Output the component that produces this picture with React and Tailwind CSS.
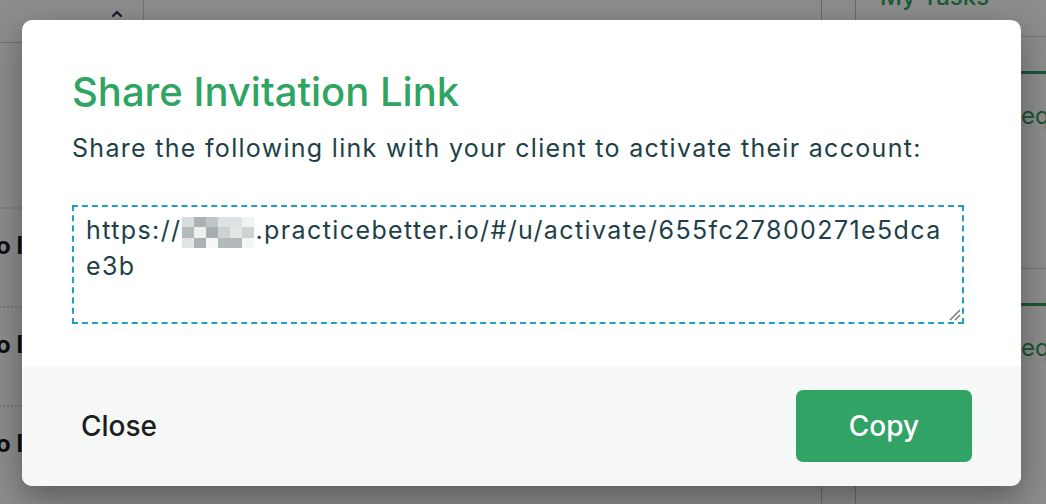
import React from 'react';

const pixels = [
  '#d7dcdc', '#aab3b3', '#bfc6c6', '#dde2e2', '#dde2e2', '#f2f4f4',
  '#b2baba', '#eef0f0', '#a5afaf', '#cdd3d3', '#e3e6e6', '#cdd3d3',
  '#e0e4e4', '#aab3b3', '#f5f6f6', '#b2baba', '#b2baba', '#f5f6f6',
];

// pixelated blur over the account subdomain
const Redacted = () => (
  <span className="inline-block overflow-hidden align-[-9px] mx-[1px] w-[72px] h-[31px]">
    <span className="grid grid-cols-6">
      {pixels.map((c, i) => (
        <span key={i} className="block h-[10.33px]" style={{ backgroundColor: c }} />
      ))}
    </span>
  </span>
);

const BackgroundPage = () => (
  <div className="flex h-full w-full bg-white">
    {/* left table column */}
    <div className="w-[144px] shrink-0 flex flex-col">
      <div className="h-[43px] border-b border-r border-[#c9cdd0] flex justify-end items-start pt-[6px] pr-[18px]">
        <svg width="16" height="16" viewBox="0 0 24 24" fill="none" stroke="#2c3a4d" strokeWidth="3.5" strokeLinecap="round" strokeLinejoin="round">
          <path d="M6 15l6-6 6 6" />
        </svg>
      </div>
      <div className="h-[164px]" />
      {[0, 1, 2].map((i) => (
        <div key={i} className="h-[99px] border-t-2 border-dotted border-[#d4d8db] pt-[19px] -ml-[4px] text-[24px] font-bold text-[#1d1d1d] whitespace-nowrap">
          o l
        </div>
      ))}
    </div>
    {/* main area */}
    <div className="flex-1 border-r border-[#b9c4bf]" />
    <div className="w-[34px] shrink-0 border-r border-[#b9c4bf]" />
    {/* right panel */}
    <div className="w-[190px] shrink-0 flex flex-col">
      <div className="h-[37px] shrink-0 border-b border-[#c9d3cf] pl-[24px]">
        <div className="-mt-[3px] text-[24px] font-medium text-[#2fa463] leading-[0px]">My Tasks</div>
      </div>
      <div className="h-[34px] shrink-0" />
      <div className="h-[198px] shrink-0 border-t-[3px] border-[#2f9a5c] border-b border-b-[#c9d3cf] pl-[150px] pt-[24px] text-[24px] text-[#2f9a5c]">
        Requests
      </div>
      <div className="h-[34px] shrink-0" />
      <div className="flex-1 border-t-[3px] border-[#2f9a5c] pl-[150px] pt-[24px] text-[24px] text-[#2f9a5c]">
        Requests
      </div>
    </div>
  </div>
);

export default function App() {
  return (
    <div className="relative w-[1046px] h-[504px] overflow-hidden font-['Inter','Liberation_Sans',sans-serif]">
      <BackgroundPage />
      <div className="absolute inset-0 bg-black/45" />

      <div className="absolute left-[22px] top-[20px] w-[999px] h-[466px] bg-white rounded-[10px] overflow-hidden shadow-[0_12px_32px_rgba(0,0,0,0.35)] flex flex-col">
        <div className="flex-1 pl-[50px] pr-[57px] pt-[48px]">
          <h2 className="text-[40px] leading-[48px] font-medium text-[#2fa463]">Share Invitation Link</h2>
          <p className="mt-[14px] text-[25px] leading-[37px] tracking-[1.3px] text-[#213f48] whitespace-nowrap">
            Share the following link with your client to activate their account:
          </p>
          <div className="relative mt-[38px] h-[119px] border-2 border-dashed border-[#1f9fc6] pl-[12px] pr-[16px] pt-[5px] text-[25px] leading-[36px] tracking-[1.4px] text-[#213f48] break-all">
            https://<Redacted />.practicebetter.io/#/u/activate/655fc27800271e5dcae3b
            <svg className="absolute right-[1px] bottom-[1px]" width="14" height="14" viewBox="0 0 14 14" stroke="#6f6f6f" strokeWidth="1.4">
              <path d="M13 3L3 13M13 8L8 13" />
            </svg>
          </div>
        </div>
        <div className="h-[120px] bg-[#f6f8f7] flex items-center justify-between pl-[50px] pr-[49px]">
          <button className="px-[9px] text-[28px] font-medium text-[#1e1e1e]">Close</button>
          <button className="w-[176px] h-[72px] rounded-[7px] bg-[#31a365] text-white text-[28px] font-medium">Copy</button>
        </div>
      </div>
    </div>
  );
}
